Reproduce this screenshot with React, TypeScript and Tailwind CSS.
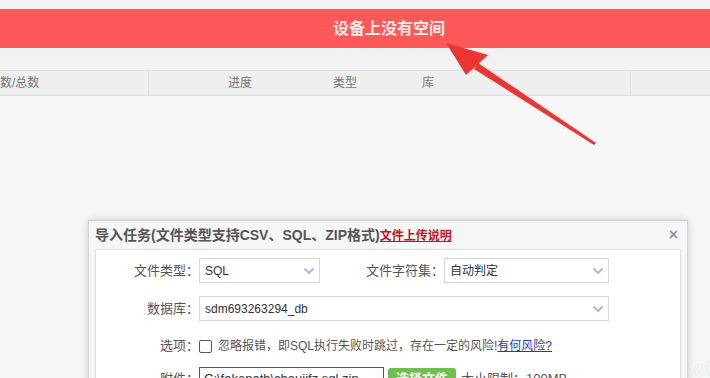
import React from "react";

const font = { fontFamily: '"Liberation Sans", "Noto Sans CJK SC", sans-serif' };

const Chevron = () => (
  <svg width="12" height="8" viewBox="0 0 12 8" className="shrink-0">
    <path d="M1.5 1.5 L6 6 L10.5 1.5" fill="none" stroke="#a7bccf" strokeWidth="2" />
  </svg>
);

const Select = ({ value, className }: { value: string; className: string }) => (
  <div
    className={`flex h-[25px] items-center justify-between border border-[#d6d6d6] bg-white pl-[5px] pr-[4px] text-[12px] text-[#333] ${className}`}
  >
    <span>{value}</span>
    <Chevron />
  </div>
);

export default function App() {
  return (
    <div className="relative h-[378px] w-[710px] overflow-hidden bg-[#f7f7f7]" style={font}>
      <div className="h-[9px] bg-[#f3f3f3]" />
      {/* alert banner */}
      <div className="flex h-[39px] items-center bg-[#fe5858] pl-[333px] text-[16px] font-bold text-[#fdeaea]">
        设备上没有空间
      </div>
      <div className="h-[22px] bg-[#f2f2f2]" />

      {/* table header */}
      <div className="grid h-[26px] grid-cols-[149px_79px_105px_89px_209px_1fr] items-center border-y border-[#dedede] bg-[#efefef] text-[12px] text-[#777]">
        <div className="flex h-full items-center border-r border-[#e2e2e2]">数/总数</div>
        <div />
        <div>进度</div>
        <div>类型</div>
        <div className="h-full border-r border-[#e2e2e2] leading-[24px]">库</div>
        <div />
      </div>

      {/* import dialog */}
      <div className="ml-[88px] mt-[124px] w-[600px] border border-[#d2d2d2] bg-[#f6f6f6] shadow-[0_0_8px_rgba(0,0,0,0.18)]">
        <div className="flex h-[28px] items-center justify-between pl-[6px] pr-[9px]">
          <div className="text-[14px] font-bold text-[#555]">
            导入任务(文件类型支持CSV、SQL、ZIP格式)
            <a className="text-[12px] text-[#c4161c] underline">文件上传说明</a>
          </div>
          <span className="text-[16px] font-bold leading-none text-[#8697ae]">×</span>
        </div>
        <div className="mx-[6px] border border-[#dddddd] bg-white pb-[20px] pt-[8px] text-[13px] text-[#555]">
          <div className="flex items-center">
            <div className="w-[103px] text-right">文件类型：</div>
            <Select value="SQL" className="w-[121px]" />
            <div className="w-[124px] text-right">文件字符集：</div>
            <Select value="自动判定" className="w-[165px]" />
          </div>
          <div className="mt-[13px] flex items-center">
            <div className="w-[103px] text-right">数据库：</div>
            <Select value="sdm693263294_db" className="w-[410px]" />
          </div>
          <div className="mt-[15px] flex h-[20px] items-center">
            <div className="w-[103px] text-right">选项：</div>
            <span className="h-[13px] w-[13px] rounded-[2px] border border-[#555] bg-white" />
            <span className="ml-[6px] text-[12px]">
              忽略报错，即SQL执行失败时跳过，存在一定的风险!
              <a className="text-[#1d3fb5] underline">有何风险?</a>
            </span>
          </div>
          <div className="mt-[11px] flex items-center">
            <div className="w-[103px] text-right">附件：</div>
            <div className="flex h-[24px] w-[185px] items-center border border-[#555] bg-white pl-[4px] text-[13px] text-[#333]">
              C:\fakepath\chaujifz.sql.zip
            </div>
            <div className="ml-[4px] flex h-[22px] items-center rounded-[3px] bg-[#6fbe4f] px-[8px] text-[13px] font-bold text-white">
              选择文件
            </div>
            <span className="ml-[5px]">大小限制：100MB</span>
          </div>
        </div>
      </div>

      {/* annotation arrow */}
      <svg className="pointer-events-none absolute left-0 top-0" width="710" height="378">
        <polygon points="594,145 596,143 478,63 474,69" fill="#ec3431" />
        <polygon points="446,43 488,55 466,75" fill="#ec3431" />
      </svg>

      {/* watermark */}
      <span className="absolute left-[694px] top-[352px] text-[22px] text-white/90 [text-shadow:0_0_1px_#bbb]">
        et
      </span>
    </div>
  );
}
